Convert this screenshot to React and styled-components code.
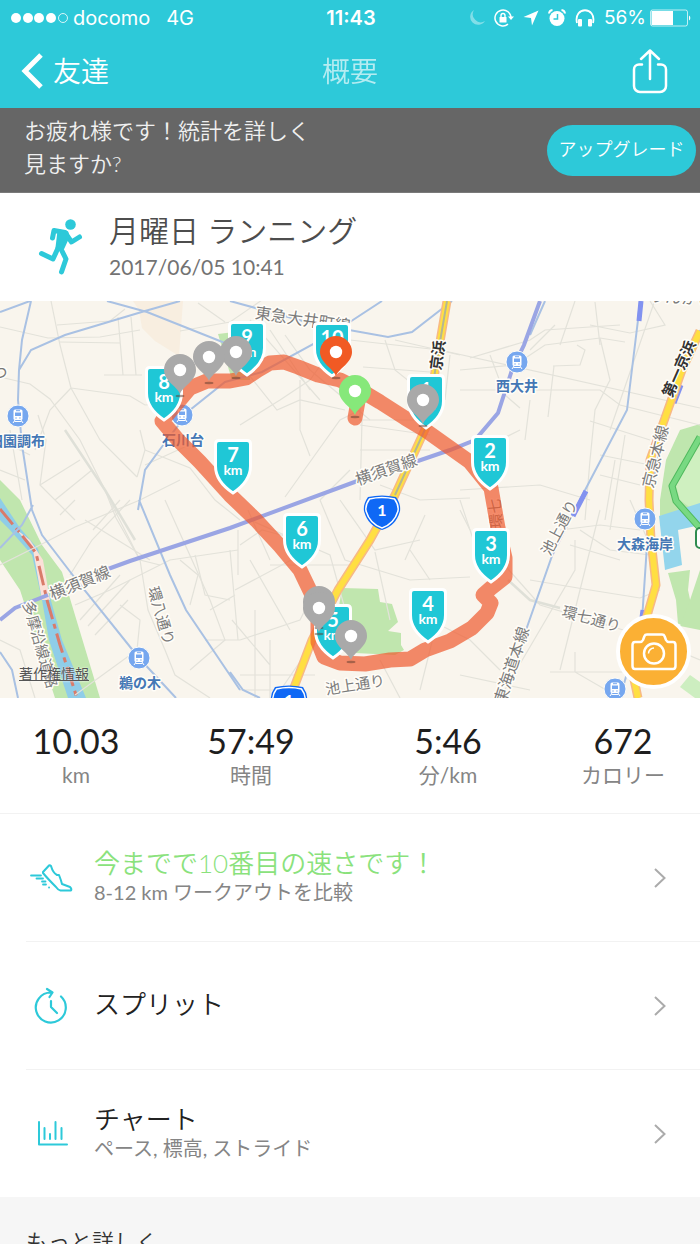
import React from "react";
import styled, { createGlobalStyle } from "styled-components";

const CYAN = "#2dc9d9";
const LATIN = `Lato, "Noto Sans CJK JP", sans-serif`;

const GlobalStyle = createGlobalStyle`
  html { scrollbar-width: none; }
  body {
    margin: 0;
    background: #f6f6f6;
    font-family: ${LATIN};
    color: #222;
  }
  * { box-sizing: border-box; }
`;

const Page = styled.div`
  display: flex;
  flex-direction: column;
  background: #fff;
`;

/* ---------- top bars ---------- */
const TopArea = styled.header`
  background: ${CYAN};
  color: #fff;
`;

const StatusBar = styled.div`
  display: grid;
  grid-template-columns: 1fr auto 1fr;
  align-items: center;
  height: 36px;
  padding: 0 8px 0 10px;
  font-family: Inter, sans-serif;
  font-size: 20px;
  line-height: 24px;
`;

const StatusGroup = styled.div`
  display: flex;
  align-items: center;
  justify-content: ${(p) => (p.$end ? "flex-end" : "flex-start")};
  gap: ${(p) => p.$gap}px;
`;

const Clock = styled.time`
  font-weight: 600;
`;

const BatteryLevel = styled.span`
  display: flex;
  align-items: center;
  gap: 4px;
  font-size: 19px;
`;

const NavBar = styled.nav`
  display: grid;
  grid-template-columns: 1fr auto 1fr;
  align-items: center;
  height: 72px;
  padding: 0 20px 2px;
`;

const BackButton = styled.button`
  justify-self: start;
  display: flex;
  align-items: center;
  gap: 9px;
  padding: 0;
  border: 0;
  background: none;
  color: #fff;
  font: 350 28px/40px ${LATIN};
`;

const NavTitle = styled.h1`
  margin: 0;
  font-size: 28px;
  font-weight: 350;
  line-height: 40px;
  opacity: 0.65;
`;

const ShareButton = styled.button`
  justify-self: end;
  padding: 0 12px 0 0;
  border: 0;
  background: none;
  color: #fff;
  svg { display: block; }
`;

/* ---------- upgrade banner ---------- */
const Banner = styled.section`
  display: flex;
  align-items: center;
  justify-content: space-between;
  height: 85px;
  padding: 0 4px 6px 24px;
  background: #666;
  border-bottom: 1px solid #7a7a7a;
`;

const BannerText = styled.p`
  margin: 0;
  max-width: 300px;
  color: #f0f0f0;
  font-size: 22px;
  font-weight: 350;
  line-height: 33px;
`;

const UpgradeButton = styled.button`
  margin-top: 7px;
  padding: 0 8px 4px;
  width: 149px;
  height: 51px;
  border: 0;
  border-radius: 26px;
  background: ${CYAN};
  color: #fff;
  font: 350 18px/26px ${LATIN};
  white-space: nowrap;
`;

/* ---------- workout heading ---------- */
const Workout = styled.section`
  display: flex;
  align-items: center;
  gap: 25px;
  height: 108px;
  padding: 0 38px;
`;

const WorkoutTitle = styled.h2`
  margin: 0;
  color: #4d4d4d;
  font-size: 30px;
  font-weight: 350;
  line-height: 40px;
`;

const WorkoutDate = styled.time`
  display: block;
  color: #737373;
  font-size: 21px;
  line-height: 34px;
`;

/* ---------- map ---------- */
const MapPanel = styled.section`
  position: relative;
  overflow: hidden;
  background: #f9f5ed;
`;

const MapDrawing = styled.svg`
  display: block;
  width: 100%;
  height: auto;
`;

const Legal = styled.a`
  position: absolute;
  left: 19px;
  bottom: 14px;
  color: #555;
  font-size: 14px;
  line-height: 20px;
  text-decoration: underline;
  text-shadow: 0 0 2px #fff;
`;

const CameraButton = styled.button`
  position: absolute;
  right: 9px;
  bottom: 9px;
  display: grid;
  place-items: center;
  width: 75px;
  height: 75px;
  padding: 0;
  border: 4px solid #fff;
  border-radius: 50%;
  background: #fbb034;
`;

/* ---------- stats ---------- */
const Stats = styled.dl`
  display: grid;
  grid-template-columns: 152fr 198fr 196fr 154fr;
  margin: 0;
  height: 115px;
  padding-top: 22px;
  text-align: center;
`;

const Stat = styled.div`
  display: flex;
  flex-direction: column-reverse;
  justify-content: flex-end;
`;

const StatValue = styled.dd`
  margin: 0;
  color: #1e1e1e;
  font-size: 34px;
  line-height: 42px;
`;

const StatLabel = styled.dt`
  color: #858585;
  font-size: 21px;
  font-weight: 400;
  line-height: 26px;
`;

/* ---------- menu rows ---------- */
const Menu = styled.ul`
  margin: 0;
  padding: 0;
  border-top: 1px solid #f2f2f2;
  list-style: none;
`;

const MenuItem = styled.li`
  margin-left: 26px;
  & + & { border-top: 1px solid #f2f2f2; }
`;

const MenuLink = styled.a`
  display: grid;
  grid-template-columns: 50px 1fr 14px;
  align-items: center;
  gap: 18px;
  height: 127px;
  padding-right: 33px;
  color: inherit;
  text-decoration: none;
`;

const MenuText = styled.span`
  padding-bottom: 4px;
`;

const MenuTitle = styled.span`
  display: block;
  color: ${(p) => (p.$accent ? "#8ae27c" : "#222")};
  font-size: 26px;
  font-weight: 350;
  line-height: 32px;
`;

const MenuNote = styled.span`
  display: block;
  color: #858585;
  font-size: 20px;
  font-weight: 400;
  line-height: 26px;
`;

const More = styled.section`
  padding: 28px 26px 12px;
  background: #f6f6f6;
`;

const MoreTitle = styled.h3`
  margin: 0;
  color: #333;
  font-size: 22px;
  font-weight: 350;
  line-height: 34px;
`;

/* ---------- icons ---------- */
const SignalDots = () => (
  <svg width="58" height="12" viewBox="0 0 58 12" fill="#fff" aria-hidden="true">
    {[6, 18, 29, 41].map((x) => <circle key={x} cx={x} cy="6" r="5" />)}
    <circle cx="53" cy="6" r="4.5" fill="none" stroke="#fff" opacity="0.8" />
  </svg>
);

const Moon = () => (
  <svg width="16" height="18" viewBox="0 0 16 18" aria-hidden="true">
    <path d="M5 1A8 8 0 1 0 16 12A8 8 0 0 1 5 1Z" fill="#fff" opacity="0.4" />
  </svg>
);

const RotationLock = () => (
  <svg width="20" height="18" viewBox="0 0 20 18" fill="none" stroke="#fff" aria-hidden="true">
    <path d="M17 9A8 8 0 1 0 14 15.2" strokeWidth="1.5" />
    <path d="M14 7.500h6l-3 3.500z" fill="#fff" stroke="none" />
    <rect x="5.500" y="8" width="7" height="5.500" rx="0.500" fill="#fff" stroke="none" />
    <path d="M7 8V6.500a2 2 0 0 1 4 0V8" strokeWidth="1.400" />
  </svg>
);

const LocationArrow = () => (
  <svg width="16" height="16" viewBox="0 0 16 16" aria-hidden="true">
    <path d="M15.500 0.500L9 15.500L8 8L0.500 7Z" fill="#fff" />
  </svg>
);

const Alarm = () => (
  <svg width="18" height="18" viewBox="0 0 18 18" fill="none" aria-hidden="true">
    <circle cx="9" cy="9.500" r="7.500" fill="#fff" />
    <path d="M1 4.500A4 4 0 0 1 4.500 1M17 4.500A4 4 0 0 0 13.500 1" stroke="#fff" strokeWidth="2" />
    <path d="M9.500 5v5H5.500" stroke={CYAN} strokeWidth="1.500" />
  </svg>
);

const Headphones = () => (
  <svg width="20" height="18" viewBox="0 0 20 18" fill="none" aria-hidden="true">
    <path d="M2 14C-2 -3 22 -3 18 14" stroke="#fff" strokeWidth="1.800" />
    <rect x="3" y="10" width="4" height="7.500" rx="1" fill="#fff" />
    <rect x="13" y="10" width="4" height="7.500" rx="1" fill="#fff" />
  </svg>
);

const Battery = () => (
  <svg width="42" height="18" viewBox="0 0 42 18" aria-hidden="true">
    <rect x="0.500" y="1" width="37" height="16" rx="2" fill="none" stroke="#fff" opacity="0.7" />
    <rect x="1.500" y="2" width="21.500" height="14" fill="#fff" />
    <path d="M39 6.500a3 3 0 0 1 0 5z" fill="#fff" />
  </svg>
);

const BackChevron = () => (
  <svg width="24" height="36" viewBox="0 0 24 36" fill="none" aria-hidden="true">
    <path d="M21 2L5 18L21 34" stroke="#fff" strokeWidth="5" />
  </svg>
);

const ShareIcon = () => (
  <svg width="36" height="46" viewBox="0 0 36 46" fill="none" stroke="#fff" strokeWidth="2.500" strokeLinecap="round" strokeLinejoin="round" aria-hidden="true">
    <path d="M10 16.500H7a5 5 0 0 0-5 5V38a6 6 0 0 0 6 6H28a6 6 0 0 0 6-6V21.500a5 5 0 0 0-5-5H26" />
    <path d="M18 31V3M9 11L18 2.500L27 11" />
  </svg>
);

const Runner = () => (
  <svg width="46" height="58" viewBox="0 0 46 58" fill="none" stroke={CYAN} strokeLinecap="round" strokeLinejoin="round" aria-hidden="true">
    <circle cx="32.500" cy="6.500" r="5.300" fill={CYAN} stroke="none" />
    <path d="M14.500 20L16 12.500L27 14.500L33.500 24L41.500 19" strokeWidth="5" />
    <path d="M21 13L29 14.500L30 19L25 30L19 29.500Z" fill={CYAN} strokeWidth="3" />
    <path d="M20.500 29L15 41L3.500 35.500" strokeWidth="5" />
    <path d="M22 29L28 41L23.500 54" strokeWidth="5" />
  </svg>
);

const Camera = () => (
  <svg width="46" height="38" viewBox="0 0 46 38" fill="none" stroke="#fff" strokeWidth="2.500" strokeLinejoin="round" aria-hidden="true">
    <path d="M4 9H9Q11 9 12 7L13.500 3Q14 1.500 16 1.500H31Q33 1.500 33.500 3L35 7Q36 9 38 9H42Q44.500 9 44.500 12V33Q44.500 36 42 36H4Q1.500 36 1.500 33V12Q1.500 9 4 9Z" />
    <circle cx="23" cy="20.500" r="10" />
    <path d="M17.500 20.500A5.500 5.500 0 0 1 23 15" strokeWidth="1.500" />
  </svg>
);

const lineIcon = { fill: "none", stroke: CYAN, strokeWidth: 2, strokeLinecap: "round", strokeLinejoin: "round", "aria-hidden": true };

const ShoeIcon = () => (
  <svg width="50" height="30" viewBox="0 0 50 30" {...lineIcon}>
    <path d="M17 9L23 2.500Q24 2 25 3Q27 10 31 12H33Q35 17 36 21L44 24Q46 26 45 27.500H34.500Q32 27 30 24Q22 16 17 10Z" />
    <path d="M5 12.500H15M10.500 15.500H17M16 18.500H19.500M17 21.500H20M23 24.500h.1" strokeWidth="1.800" />
  </svg>
);

const SplitIcon = () => (
  <svg width="50" height="38" viewBox="0 0 50 38" {...lineIcon} strokeWidth="2.200">
    <path d="M35 9.500A15 15 0 1 1 25 5.500M21 2L26.500 5.500L23.500 10M25 14V20L31 26" />
  </svg>
);

const ChartIcon = () => (
  <svg width="50" height="28" viewBox="0 0 50 28" {...lineIcon}>
    <path d="M13 2V24.500H41M18.500 8V19M24 14V19M29.500 2V19M35.500 8V19" />
  </svg>
);

const Chevron = () => (
  <svg width="14" height="22" viewBox="0 0 14 22" fill="none" aria-hidden="true">
    <path d="M2 2L11.500 11L2 20" stroke="#ababab" strokeWidth="2" />
  </svg>
);

/* ---------- map pieces ---------- */
const Label = styled.text`
  font-family: "Noto Sans CJK JP", sans-serif;
  font-size: ${(p) => p.$size || 15}px;
  font-weight: ${(p) => (p.$bold ? 700 : 400)};
  text-anchor: middle;
  fill: ${(p) => p.$color || "#7b7b7b"};
  stroke: #fffdf8;
  stroke-width: 3px;
  stroke-linejoin: round;
  paint-order: stroke;
`;

const ShieldText = styled.text`
  font: 700 ${(p) => p.$size}px ${LATIN};
  text-anchor: middle;
  fill: #fff;
`;

const KmShield = ({ x, y, n }) => (
  <g transform={`translate(${x} ${y})`}>
    <path d="M-14 1.500H14Q17.500 1.500 17.500 5V27C17.500 40 9 48 0 54C-9 48 -17.500 40 -17.500 27V5Q-17.500 1.500 -14 1.500Z" fill="#1fc7d6" stroke="#fff" strokeWidth="3" />
    <ShieldText $size={20} y="23">{n}</ShieldText>
    <ShieldText $size={14} y="36">km</ShieldText>
  </g>
);

const Pin = ({ x, y, color = "#a9a9a9" }) => (
  <g transform={`translate(${x} ${y})`}>
    <ellipse cx="0" cy="26" rx="4.500" ry="1.200" fill="#5b3a2c" opacity="0.5" />
    <path d="M0 24C-3 16 -16 11 -16 0A16 16 0 0 1 16 0C16 11 3 16 0 24Z" fill={color} />
    <circle r="6.200" fill="#fff" />
  </g>
);

const Station = ({ x, y }) => (
  <g transform={`translate(${x} ${y})`}>
    <circle r="11" fill="#76a7ef" stroke="#fffdf8" />
    <rect x="-4.500" y="-6.500" width="9" height="10.500" rx="1.500" fill="#fff" />
    <rect x="-3" y="-3.500" width="6" height="3.500" fill="#76a7ef" />
    <path d="M-2 -5.300H2M-2.700 2h1.500M1.200 2h1.500" stroke="#76a7ef" />
    <path d="M-3 4L-5 7M3 4L5 7M-3.500 5.500H3.500" stroke="#fff" />
  </g>
);

const RouteOne = ({ x, y }) => (
  <g transform={`translate(${x} ${y})`}>
    <path d="M-14 -15Q0 -18 14 -15Q19 -8 18 -1Q14 14 0 18Q-14 14 -18 -1Q-19 -8 -14 -15Z" fill="#0f68f5" />
    <path d="M-12.500 -13Q0 -16 12.500 -13Q17 -7 16 -1Q12 12 0 16Q-12 12 -16 -1Q-17 -7 -12.500 -13Z" fill="none" stroke="#fff" strokeWidth="1.500" />
    <ShieldText $size={16} y="4">1</ShieldText>
  </g>
);

const MINOR_ROADS = [
  "M0 377L30 384L50 399L80 440L105 490L116 518L140 560L148 610L165 650L175 675L210 698",
  "M0 327L48 338L100 337L140 330",
  "M51 301L60 345L71 388L50 410L35 450",
  "M71 388L130 396L145 405L160 404M71 388L100 440L137 477",
  "M60 342L120 343M118 317L123 375M131 317L136 375M104 375H142",
  "M57 325L110 321L125 309",
  "M180 331L230 322L262 300M225 322L198 303",
  "M38 415L46 440L40 485L75 520M40 485L80 460M55 500L92 470M60 515L75 500M93 530L120 500M137 477L145 450L140 430",
  "M145 450L190 468L215 500L240 520M145 465L200 440",
  "M0 440L30 455M0 470L25 480M10 430L22 500",
  "M0 565L40 545L75 527L140 500L180 480",
  "M70 575L92 540L130 500M85 520L150 560M110 501L140 560L160 565",
  "M75 605L110 590L170 560L238 550M195 555L205 595L230 600M180 560L198 575L190 605",
  "M80 620L120 575M88 626L130 580M95 635L128 600M120 605L140 620L137 650L75 695",
  "M210 610L235 595M205 640H240M230 550L238 640",
  "M240 545L262 530L300 540M250 560L290 630M235 590L310 550M240 640L300 620L310 600",
  "M238 530V575M248 510L270 560M232 620L270 665M255 610V698M270 640V698",
  "M240 675H315M275 698L315 640M240 690H300",
  "M250 520L330 555L348 620M270 565H350",
  "M320 500L345 560L410 580L470 577",
  "M375 552L390 620M410 550L430 580M425 515L405 560M380 485L420 500L470 498",
  "M340 500L375 550L420 540M350 470L320 500",
  "M285 497L340 420L360 410M240 425L280 400L310 380L345 330",
  "M285 335L310 370L370 420M270 330L310 390M250 320L320 400",
  "M245 370L277 410L300 400L345 410M300 380V430L310 456",
  "M363 367L430 372M360 375V420H432M360 425L430 435M360 450H430M362 420L360 500",
  "M385 340L395 370L420 390M395 340L460 355M450 355L445 400",
  "M350 340L440 350L700 408M470 358L530 340L545 330L620 325",
  "M460 370L515 365L545 345L600 338L625 342",
  "M460 390H500L600 390L620 405L700 425M490 355L505 395L520 408",
  "M600 338L610 380L595 410L590 460L585 520",
  "M577 345L585 350L580 365L553 366M554 366L548 417",
  "M595 302L600 345M590 325L630 333L665 325L650 301",
  "M520 430L500 440L495 460M530 400L525 440M460 490L540 485L590 500",
  "M590 421L650 440M625 435L610 530M600 455L650 465M600 475L640 485M615 460L605 520",
  "M530 580L590 590L640 598L660 590M560 530L600 525L640 530M575 540V570L500 698",
  "M600 510L590 550L560 670M580 530L610 550L650 555M570 545L620 560",
  "M500 560L540 605L640 635L700 660M460 500L480 560L500 580",
  "M460 510L470 530M550 672H640M575 652V672L620 698M460 675L530 690",
  "M430 620L470 640L500 670M440 610L420 690M380 660L400 698",
  "M0 640L20 650L35 698M630 500L650 545M655 300L610 430",
  "M575 301L560 345M555 325L530 350M165 500L210 600L225 640L190 670",
];

const LINES = "M31 301L22 340L19 370L18 400L22 445L32 510L42 535L78 582L139 658L176 698M0 312L30 301M19 370L31 350L65 335L145 311L180 301M107 301L147 312L230 345M230 301L310 323L388 337L412 332L452 301M382 301L330 335L262 372L225 382L190 410L161 448L145 470L138 510M139 500L170 575L186 610L240 690M0 548L22 525L33 505M0 652L12 670L18 698M230 672L243 690L260 698M545 301L530 335M700 330L665 420L650 500L646 560L642 620L620 698M640 301L638 320L627 410L583 494L552 556L526 630";

const TRUNK_ROADS = "M447 301L436 365L427 425L395 495L370 540L338 590L312 640L290 698M700 331L682 370L665 418L650 460L649 500L651 540L656 585L640 640L632 670L638 698";

const COAST_ROAD = "M700 437L672 486L676 501L700 528";

const Route = () => (
  <path
    d="M355 418L360 390L340 380L318 375L298 367L284 362L270 363L258 370L246 378L230 381L207 381L190 388L162 421L178 440L200 462L230 495L256 520L280 546L300 570L312 595L318 620L318 642L324 657L340 663L365 664L390 660L410 659L425 650L450 641L472 628L487 613L491 603L483 595L491 588L505 577L505 558L498 528L491 488L470 462L425 430L405 418L380 402L360 390"
    fill="none" stroke="#ef5a2e" strokeOpacity="0.7" strokeWidth="15" strokeLinecap="round" strokeLinejoin="round"
  />
);

const RouteMap = () => (
  <MapDrawing viewBox="0 301 700 397" role="img" aria-label="ランニングコースの地図">
    <rect y="301" width="700" height="397" fill="#f9f5ed" />
    <path d="M133 301H183L179 356L155 341L142 328L139 310Z" fill="#f8eee0" />
    <path d="M218 334L250 330V380H232Z" fill="#c0e6ae" />

    {/* river and its banks */}
    <path d="M0 480L20 500L42 545L62 572L100 698H55L33 630L20 590L0 560Z" fill="#c0e6ae" />
    <path d="M0 498L20 528L38 549L48 590L62 640L86 698H68L49 640L42 600L32 555L10 530L0 520Z" fill="#8fcde8" />
    <path d="M17 530L33 550L42 600H50L43 560L30 540Z" fill="#fbe0d8" />
    <path d="M0 509L20 533L36 553L47 600L60 645L77 698" fill="none" stroke="#d97b6a" strokeWidth="3" strokeDasharray="20 5 5 5" />

    {/* park by the 5 km mark */}
    <path d="M342 588L378 589L380 602L392 604L398 622L388 631L401 633V645L404 650L395 655L355 653L338 612Z" fill="#c0e6ae" />

    {/* waterfront */}
    <path d="M700 424L680 430L666 460L660 500V516L700 508Z" fill="#bfe6ae" />
    <path d="M700 445L675 482L680 500L700 515Z" fill="#cff0c0" />
    <path d="M659 516L700 503V525L678 530L682 565L665 570Z" fill="#93d5ec" />
    <path d="M668 573L690 570L688 590L695 623L700 628L678 624L676 600Z" fill="#c0e6ae" />
    <path d="M700 570V630L680 626L690 600Z" fill="#c0e6ae" />
    <path d="M690 675L700 682V698H695L680 687Z" fill="#cdeec0" />

    <g fill="none" stroke="#e3e2da" strokeWidth="1.200">
      {MINOR_ROADS.map((d) => <path key={d} d={d} />)}
    </g>
    <path d="M65 430L105 490L135 540M508 580L530 600L560 608" fill="none" stroke="#dfe0d8" strokeWidth="2.500" />

    {/* railways */}
    <path d={LINES} fill="none" stroke="#a9c1e3" strokeWidth="2" />
    <path d="M641 301L639 321M586 491L573 516M681 385L674 403M643 610L641 625" stroke="#8292f0" strokeWidth="5" />
    <path d="M0 620L15 608L48 595M108 569L130 561L230 528L360 480M412 463L450 450L475 440L498 413L512 370L524 345L540 301" fill="none" stroke="#9aa5e4" strokeWidth="4" />

    {/* trunk roads */}
    <g fill="none" strokeLinejoin="round">
      <path d={TRUNK_ROADS} stroke="#f7b985" strokeWidth="9" />
      <path d={TRUNK_ROADS} stroke="#ffdf42" strokeWidth="6" />
      <path d="M447 301L436 365L427 425L395 495" stroke="#b5b793" strokeWidth="2" />
      <path d={COAST_ROAD} stroke="#4fb95d" strokeWidth="7" />
      <path d={COAST_ROAD} stroke="#78d982" strokeWidth="5" />
    </g>
    <rect x="696" y="528" width="20" height="20" rx="4" fill="#fff" stroke="#2f8c4f" strokeWidth="2" />

    <Label x="0" y="378" $color="#777">つ</Label>
    <Label transform="translate(302 325) rotate(8)" $size={16}>東急大井町線</Label>
    <Label transform="translate(388 475) rotate(-19)" $size={16}>横須賀線</Label>
    <Label transform="translate(82 588) rotate(-22)" $size={16}>横須賀線</Label>
    <Label transform="translate(443 356) rotate(-82)" $color="#333" $bold>京浜</Label>
    <Label transform="translate(684 371) rotate(-66)" $color="#333" $bold>第一京浜</Label>
    <Label transform="translate(661 458) rotate(-76)" $size={16}>京急本線</Label>
    <Label transform="translate(564 530) rotate(-62)">池上通り</Label>
    <Label transform="translate(517 667) rotate(-72)" $size={16}>東海道本線</Label>
    <Label transform="translate(590 624) rotate(15)">環七通り</Label>
    <Label transform="translate(156 617) rotate(74)">環八通り</Label>
    <Label transform="translate(35 646) rotate(74)">多摩沿線道路</Label>
    <Label transform="translate(356 690) rotate(-9)">池上通り</Label>
    <Label transform="translate(689 304) rotate(4)" $size={16}>りんかい線</Label>
    <Label transform="translate(501 513) rotate(-95)">環七</Label>

    <Station x={18} y={416} />
    <Station x={182} y={415} />
    <Station x={517} y={362} />
    <Station x={139} y={658} />
    <Station x={645} y={519} />
    <Station x={615} y={689} />
    <Label x="17" y="446" $size={14} $color="#4477b5" $bold>田園調布</Label>
    <Label x="183" y="445" $size={14} $color="#4477b5" $bold>石川台</Label>
    <Label x="517" y="391" $size={14} $color="#4477b5" $bold>西大井</Label>
    <Label x="140" y="688" $size={14} $color="#4477b5" $bold>鵜の木</Label>
    <Label x="645" y="549" $size={14} $color="#4477b5" $bold>大森海岸</Label>
    <RouteOne x={382} y={512} />
    <RouteOne x={289} y={702} />

    <Route />

    <KmShield x={247} y={321} n="9" />
    <KmShield x={332} y={322} n="10" />
    <KmShield x={164} y={366} n="8" />
    <KmShield x={426} y={374} n="1" />
    <KmShield x={490} y={435} n="2" />
    <KmShield x={233} y={439} n="7" />
    <KmShield x={302} y={513} n="6" />
    <KmShield x={491} y={528} n="3" />
    <KmShield x={428} y={588} n="4" />
    <KmShield x={333} y={604} n="5" />
    <Pin x={236} y={352} />
    <Pin x={209} y={357} />
    <Pin x={180} y={370} />
    <Pin x={336} y={352} color="#f15a24" />
    <Pin x={355} y={391} color="#86e87a" />
    <Pin x={423} y={400} />
    <Pin x={319} y={602} />
    <Pin x={319} y={608} />
    <Pin x={351} y={636} />
  </MapDrawing>
);

const STATS = [
  { value: "10.03", label: "km" },
  { value: "57:49", label: "時間" },
  { value: "5:46", label: "分/km" },
  { value: "672", label: "カロリー" },
];

const ROWS = [
  { Icon: ShoeIcon, title: "今までで10番目の速さです！", note: "8-12 km ワークアウトを比較", accent: true },
  { Icon: SplitIcon, title: "スプリット" },
  { Icon: ChartIcon, title: "チャート", note: "ペース, 標高, ストライド" },
];

export default function App() {
  return (
    <Page>
      <GlobalStyle />
      <TopArea>
        <StatusBar>
          <StatusGroup $gap={16}>
            <StatusGroup as="span" $gap={5}><SignalDots />docomo</StatusGroup>
            <span>4G</span>
          </StatusGroup>
          <Clock>11:43</Clock>
          <StatusGroup $end $gap={9}>
            <Moon />
            <RotationLock />
            <LocationArrow />
            <Alarm />
            <Headphones />
            <BatteryLevel>56%<Battery /></BatteryLevel>
          </StatusGroup>
        </StatusBar>
        <NavBar>
          <BackButton type="button"><BackChevron />友達</BackButton>
          <NavTitle>概要</NavTitle>
          <ShareButton type="button" aria-label="共有"><ShareIcon /></ShareButton>
        </NavBar>
      </TopArea>

      <Banner>
        <BannerText>お疲れ様です！統計を詳しく見ますか?</BannerText>
        <UpgradeButton type="button">アップグレード</UpgradeButton>
      </Banner>

      <Workout>
        <Runner />
        <div>
          <WorkoutTitle>月曜日 ランニング</WorkoutTitle>
          <WorkoutDate dateTime="2017-06-05T10:41">2017/06/05 10:41</WorkoutDate>
        </div>
      </Workout>

      <MapPanel>
        <RouteMap />
        <Legal href="#legal">著作権情報</Legal>
        <CameraButton type="button" aria-label="写真を撮る"><Camera /></CameraButton>
      </MapPanel>

      <Stats>
        {STATS.map((s) => (
          <Stat key={s.label}>
            <StatLabel>{s.label}</StatLabel>
            <StatValue>{s.value}</StatValue>
          </Stat>
        ))}
      </Stats>

      <Menu>
        {ROWS.map(({ Icon, title, note, accent }) => (
          <MenuItem key={title}>
            <MenuLink href="#detail">
              <Icon />
              <MenuText>
                <MenuTitle $accent={accent}>{title}</MenuTitle>
                {note && <MenuNote>{note}</MenuNote>}
              </MenuText>
              <Chevron />
            </MenuLink>
          </MenuItem>
        ))}
      </Menu>

      <More>
        <MoreTitle>もっと詳しく</MoreTitle>
      </More>
    </Page>
  );
}
